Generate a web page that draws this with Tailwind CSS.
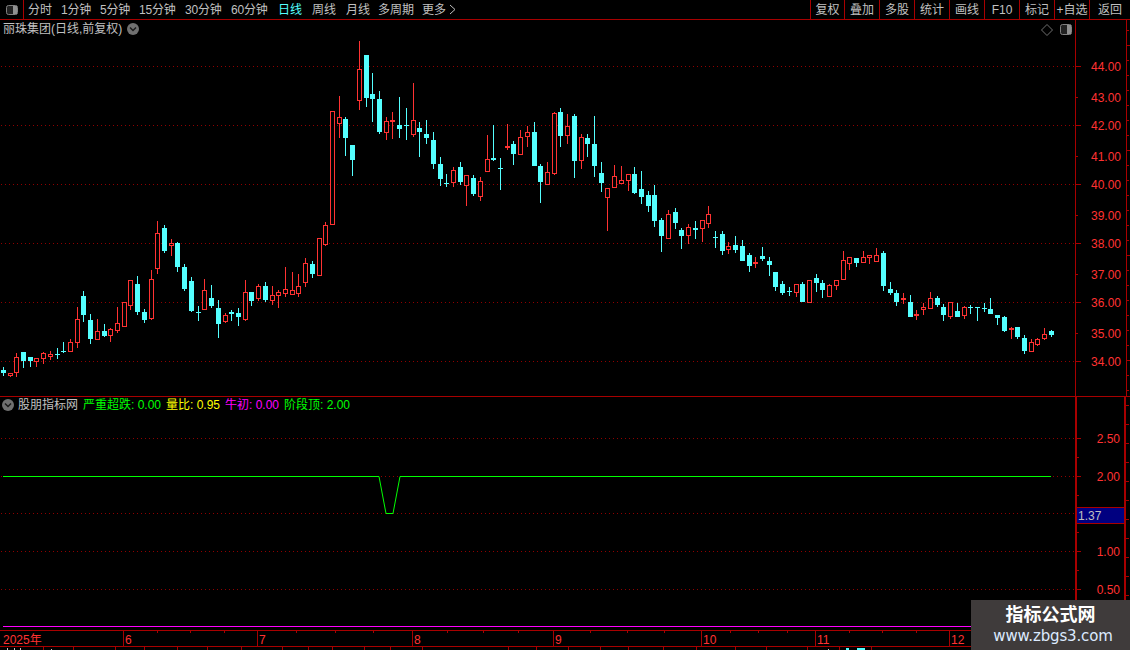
<!DOCTYPE html>
<html lang="zh-CN">
<head>
    <meta charset="UTF-8">
    <title>丽珠集团 K线</title>
    <script src="https://cdn.jsdelivr.net/npm/@tailwindcss/browser@4"></script>
</head>
<body class="bg-black">
    <div class="relative w-[1130px] h-[650px] overflow-hidden bg-black flex flex-col text-[12px] leading-none text-[#c0c0c0] [font-family:'Liberation_Sans','Noto_Sans_CJK_SC',sans-serif]">

        <!-- Toolbar -->
        <div class="flex h-[20px] border-b border-[#a80000] shrink-0">
            <div class="w-[24px] border-r border-[#a80000] flex items-center justify-center">
                <svg width="14" height="12" viewBox="0 0 14 12"><rect x="1.5" y="1.5" width="11" height="9" rx="2" fill="#222" stroke="#808080"/><rect x="8" y="2" width="4" height="8" fill="#909090"/></svg>
            </div>
            <div class="flex items-center pl-[4px] w-[786px] whitespace-nowrap">
                <span class="w-[33px]">分时</span>
                <span class="w-[39px] tracking-[-0.2px]">1分钟</span>
                <span class="w-[39px] tracking-[-0.2px]">5分钟</span>
                <span class="w-[46px] tracking-[-0.2px]">15分钟</span>
                <span class="w-[46px] tracking-[-0.2px]">30分钟</span>
                <span class="w-[47px] tracking-[-0.2px]">60分钟</span>
                <span class="w-[34px] text-[#54ffff]">日线</span>
                <span class="w-[34px]">周线</span>
                <span class="w-[32px]">月线</span>
                <span class="w-[44px]">多周期</span>
                <span class="flex items-center gap-[3px]">更多
                    <svg width="7" height="11" viewBox="0 0 7 11"><path d="M1 1l5 4.5L1 10" fill="none" stroke="#c0c0c0"/></svg>
                </span>
            </div>
            <div class="flex">
                <div class="w-[34px] border-l border-[#a80000] flex items-center justify-center">复权</div>
                <div class="w-[35px] border-l border-[#a80000] flex items-center justify-center">叠加</div>
                <div class="w-[35px] border-l border-[#a80000] flex items-center justify-center">多股</div>
                <div class="w-[35px] border-l border-[#a80000] flex items-center justify-center">统计</div>
                <div class="w-[35px] border-l border-[#a80000] flex items-center justify-center">画线</div>
                <div class="w-[35px] border-l border-[#a80000] flex items-center justify-center">F10</div>
                <div class="w-[35px] border-l border-[#a80000] flex items-center justify-center">标记</div>
                <div class="w-[35px] border-l border-[#a80000] flex items-center justify-center whitespace-nowrap">+自选</div>
                <div class="w-[41px] border-l border-[#a80000] flex items-center justify-center">返回</div>
            </div>
        </div>

        <!-- Price panel -->
        <div class="flex h-[377px] border-b border-[#a80000] shrink-0">
            <div class="relative w-[1075px] shrink-0">
                <svg id="price" class="block" width="1075" height="376" viewBox="0 20 1075 376" shape-rendering="crispEdges"></svg>
                <div class="absolute left-[3px] top-[3px] flex items-center gap-[5px] h-[12px]">
                    <span>丽珠集团(日线,前复权)</span>
                    <svg width="12" height="12" viewBox="0 0 12 12"><circle cx="6" cy="6" r="6" fill="#707070"/><path d="M3 4.5l3 3 3-3" fill="none" stroke="#1a1a1a" stroke-width="1.5"/></svg>
                </div>
                <svg class="absolute left-[1041px] top-[4px]" width="32" height="12" viewBox="0 0 32 12">
                    <path d="M6 0.5l5.5 5.5L6 11.5 0.5 6z" fill="none" stroke="#707070"/>
                    <rect x="19.5" y="0.5" width="11" height="10" rx="2" fill="#222" stroke="#808080"/><rect x="26" y="1" width="4" height="9" fill="#909090"/>
                </svg>
            </div>
            <div class="w-[51px] border-l border-[#a80000] shrink-0">
                <svg id="priceAxis" class="block text-[12px]" width="50" height="376" viewBox="1076 20 50 376"></svg>
            </div>
            <div class="flex-1 border-l border-[#a80000]">
                <svg id="priceStrip" class="block" width="3" height="376" viewBox="0 20 3 376" shape-rendering="crispEdges"></svg>
            </div>
        </div>

        <!-- Indicator panel -->
        <div class="flex h-[233px] shrink-0">
            <div class="relative w-[1075px] shrink-0">
                <svg id="indicator" class="block" width="1075" height="233" viewBox="0 397 1075 233" shape-rendering="crispEdges"></svg>
                <div class="absolute left-[2px] top-[2px] flex items-center h-[12px] whitespace-nowrap">
                    <svg class="mr-[4px]" width="12" height="12" viewBox="0 0 12 12"><circle cx="6" cy="6" r="6" fill="#707070"/><path d="M3 4.5l3 3 3-3" fill="none" stroke="#1a1a1a" stroke-width="1.5"/></svg>
                    <span class="w-[65px]">股朋指标网</span>
                    <span class="w-[83px] text-[#00ff00]">严重超跌: 0.00</span>
                    <span class="w-[59px] text-[#ffff00]">量比: 0.95</span>
                    <span class="w-[59px] text-[#ff00ff]">牛初: 0.00</span>
                    <span class="text-[#00ff00]">阶段顶: 2.00</span>
                </div>
                <div class="absolute left-[3px] right-0 top-[229px] h-px bg-[#ff00ff]"></div>
            </div>
            <div class="relative w-[51px] border-x-2 border-[#a80000] shrink-0">
                <svg id="indAxis" class="block" width="47" height="233" viewBox="1078 397 47 233"></svg>
                <div class="absolute inset-x-0 top-[110px] h-[17px] bg-[#000080] border-y border-[#a80000] flex items-center pl-px text-[#c0c0c0]">1.37</div>
            </div>
            <div class="flex-1">
                <svg id="indStrip" class="block" width="4" height="233" viewBox="0 397 4 233" shape-rendering="crispEdges"></svg>
            </div>
        </div>

        <!-- Time axis -->
        <div class="h-[17px] border-y border-[#a80000] shrink-0">
            <svg id="timeAxis" class="block text-[12px]" width="1130" height="15" viewBox="0 631 1130 15"></svg>
        </div>

        <!-- Bottom strip, only the top of it is in view -->
        <svg id="bottomStrip" class="block shrink-0" width="1130" height="3" viewBox="0 647 1130 3" shape-rendering="crispEdges"></svg>

        <!-- Watermark -->
        <div class="absolute left-[971px] top-[600px] w-[159px] h-[50px] bg-[#3f3b3b] flex flex-col items-center pt-[5px] gap-[3px]">
            <span class="text-[18px] font-bold text-white leading-[20px]">指标公式网</span>
            <span class="ml-[5px] text-[15px] leading-[16px] text-[#dceaff] [font-family:'DejaVu_Sans',sans-serif] tracking-[-0.15px]">www.zbgs3.com</span>
        </div>
    </div>

    <script>
        const RED = '#ff3232', CYAN = '#54ffff', LINE = '#a80000', GRID = '#900000';

        // traced candles: type, high, body top, body bottom, low (3x crop coordinates)
        const seg1 = [
            'c501,510,519,527','r520,520,527,530','r460,472,518,530','c456,456,483,503','c471,471,483,500',
            'r475,475,485,500','r456,460,478,491','r453,462,470,479','c444,462,465,476','c426,453,456,458',
            'r418,427,455,455','r321,358,428,443','c273,288,345,365','c342,360,417,431','r357,394,419,419',
            'c372,393,408,411','r384,388,407,426','r321,370,392,399','r307,307,380,380','r241,241,317,330',
            'c228,252,336,345','c327,336,360,369','r210,238,356,360','r64,100,206,222','c75,84,153,159',
            'r117,130,137,168','c126,129,201,216','c193,201,267,273','c231,243,333,336','c318,336,339,363',
            'r237,271,329,329','c255,294,318,324','c300,324,372,414','r340,346,365,369','c330,336,342,363',
            'c324,339,351,378','r240,277,359,363','c276,276,303,318','r252,259,296,303','c246,258,300,306',
            'r258,286,302,315','r270,277,287,324','r201,268,281,291','r216,271,284,286','r222,259,282,291'
        ];
        const seg2 = [ // y offset 210
            'r144,160,220,231','c153,162,192,204','r85,85,197,197','r36,46,104,107'
        ];
        const seg3 = [ // y offset 30
            'r244,244,584,584','r198,262,281,324','c262,267,324,378','c345,345,390,438','r33,118,212,240',
            'c75,75,204,231','c129,192,207,276','c183,207,306,312','r262,274,308,330','r246,270,275,327',
            'c201,285,297,324','c234,285,288,330','r159,271,315,321','c276,294,306,381','c270,312,324,342',
            'c306,330,402,417','c381,402,447,468','c432,459,462,471','r411,421,459,471','c396,411,456,465',
            'r436,436,467,528','c435,444,492,498','r441,454,500,513','r315,388,425,425','c285,384,390,393',
            'c384,414,417,480','r282,348,354,360','c333,342,372,405','r300,322,374,374','r288,307,320,351',
            'c276,306,408,408','c402,408,456,519','r396,427,464,464','r246,250,431,435','c234,246,318,351',
            'r252,289,317,342','c252,258,393,444','r312,322,392,417','c312,324,342,381','c258,342,408,441',
            'c396,429,459,486','r474,475,503,603','r405,439,473,473'
        ];
        const seg4 = [ // y offset 150
            'r48,91,101,101','r72,72,92,123','c51,72,129,132','c63,117,141,162','c123,135,168,186',
            'c105,135,213,231','c204,210,258,306','r180,193,266,266','c174,186,219,237','c234,240,258,297',
            'r222,232,257,282','c213,234,240,267','r210,211,236,276','r168,193,221,234','c243,261,264,294',
            'c243,252,303,315','r276,289,299,312','c258,285,300,309','c270,288,333,333','c309,315,348,366',
            'r321,336,341,354','c291,318,327,333','c321,333,345,378','c366,366,411,423','c393,402,429,435',
            'c411,423,426,438','r403,403,428,441','c396,402,456,456','r391,391,458,458','c372,384,399,426',
            'c390,399,420,444','r402,406,440,440','r391,391,407,420','r303,331,389,389','r322,322,341,360',
            'c324,324,339,351','r303,322,338,338','r316,316,323,342','r294,316,335,335','c303,309,408,423',
            'c396,417,429,435','c420,429,456,468','r429,444,449,462','c435,456,501,501','r480,492,497,510',
            'r459,472,480,495','r426,445,476,476','c438,444,465,471','c462,471,495,513','r457,457,500,506',
            'c459,483,501,501','r468,472,497,507','c465,471,474,492','c471,471,474,513','c459,474,477,486',
            'c444,477,492,492','c495,495,504,525','c498,501,543,546','r531,535,541,567','c531,531,561,567',
            'c555,564,603,612','r567,577,605,605','r564,568,585,588','r534,553,567,570','c540,543,555,561'
        ];

        function rect(x, y, w, h, fill) {
            return `<rect x="${x}" y="${y}" width="${w}" height="${h}" fill="${fill}"/>`;
        }

        function candles() {
            let out = '', i = 0;
            const groups = [[seg1, 200], [seg2, 210], [seg3, 30], [seg4, 150]];
            for (const [list, off] of groups) {
                for (const item of list) {
                    const [hi, top, bot, lo] = item.slice(1).split(',').map(v => Math.round(off + v / 3));
                    const x = Math.floor(3.33 + 6.718 * i);
                    if (item[0] === 'c') {
                        out += rect(x, hi, 1, lo - hi, CYAN);
                        out += rect(x - 2, top, 5, Math.max(bot - top, 1), CYAN);
                    } else if (bot - top < 3) {
                        out += rect(x, hi, 1, lo - hi, RED);
                        out += rect(x - 2, top, 5, Math.max(bot - top, 1), RED);
                    } else {
                        out += rect(x, hi, 1, top - hi, RED);
                        out += rect(x, bot, 1, lo - bot, RED);
                        out += `<rect x="${x - 1.5}" y="${top + 0.5}" width="4" height="${bot - top - 1}" fill="#000" stroke="${RED}"/>`;
                    }
                    i++;
                }
            }
            return out;
        }

        // one-pixel dots, dashes get uneven with crispEdges
        function dotted(y, x2) {
            let out = '';
            for (let x = 1; x < x2; x += 4) out += rect(x, y, 1, 1, GRID);
            return out;
        }

        function label(x, y, txt, anchor) {
            return `<text x="${x}" y="${y}" text-anchor="${anchor}" fill="${RED}">${txt}</text>`;
        }

        // price panel
        let s = '';
        [66, 125, 184, 243, 302, 361].forEach(y => s += dotted(y, 1075));
        document.getElementById('price').innerHTML = s + candles();

        const priceLabels = [[44, 66], [43, 97], [42, 125], [41, 156], [40, 184], [39, 215], [38, 243], [37, 274], [36, 302], [35, 333], [34, 361]];
        s = '';
        priceLabels.forEach(([v, y]) => {
            s += rect(1076, y, v % 2 ? 2 : 5, 1, LINE);
            s += label(1121, y + 5, v + '.00', 'end');
        });
        document.getElementById('priceAxis').innerHTML = s;

        s = '';
        for (let y = 30; y < 396; y += 15) s += rect(0, y, (y % 105 === 45 % 105) ? 3 : 2, 1, LINE);
        document.getElementById('priceStrip').innerHTML = s;

        // indicator panel
        s = '';
        [438, 476, 513, 551, 589].forEach(y => s += dotted(y, 1075));
        s += `<polyline points="3,476.5 379,476.5 386,513.5 393,513.5 400,476.5 1051,476.5" fill="none" stroke="#00ff00" shape-rendering="auto"/>`;
        document.getElementById('indicator').innerHTML = s;

        s = '';
        [[2.5, 438], [2, 476], [1, 551], [0.5, 589]].forEach(([v, y]) => {
            s += rect(1078, y, 4, 1, LINE);
            s += label(1121, y + 5, v.toFixed(2), 'end');
        });
        [457, 495, 532, 570, 608].forEach(y => s += rect(1078, y, 2, 1, LINE));
        document.getElementById('indAxis').innerHTML = s;

        s = '';
        for (let y = 405; y < 630; y += 19) s += rect(0, y, 3, 1, LINE);
        document.getElementById('indStrip').innerHTML = s;

        // time axis
        s = label(3, 644, '2025年', 'start');
        [[123, '6'], [257, '7'], [412, '8'], [553, '9'], [701, '10'], [815, '11'], [949, '12']].forEach(([x, t]) => {
            s += `<rect x="${x}" y="631" width="1" height="15" fill="${LINE}"/>`;
            s += label(x + 2, 644, t, 'start');
        });
        [157, 190, 224, 296, 335, 373, 447, 483, 518, 590, 627, 664, 730, 758, 787, 849, 882, 916].forEach(x => {
            s += `<rect x="${x}" y="631" width="1" height="2" fill="${LINE}"/>`;
        });
        document.getElementById('timeAxis').innerHTML = s;

        s = '';
        [43, 73, 115, 144, 177, 207, 241, 282, 308, 332, 364, 390, 422, 508, 536, 568, 600, 628, 663, 696, 735, 766, 807, 839, 871].forEach(x => {
            s += rect(x, 647, 1, 3, LINE);
        });
        s += rect(7, 648, 1, 2, '#c0c0c0') + rect(14, 648, 1, 2, '#c0c0c0') + rect(20, 648, 1, 2, '#c0c0c0') + rect(51, 649, 1, 1, '#c0c0c0');
        s += rect(828, 649, 1, 1, '#c0c0c0') + rect(846, 648, 3, 2, CYAN) + rect(857, 648, 8, 2, CYAN);
        document.getElementById('bottomStrip').innerHTML = s;
    </script>
</body>
</html>
